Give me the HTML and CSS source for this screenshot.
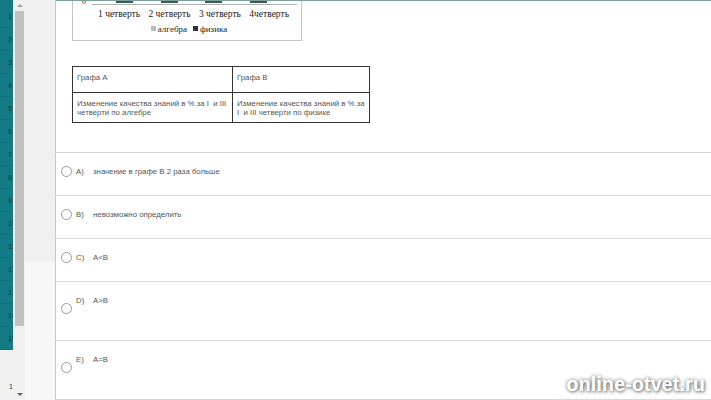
FILE: index.html
```html
<!DOCTYPE html>
<html lang="ru">

<head>
    <meta charset="UTF-8">
    <meta name="viewport" content="width=device-width, initial-scale=1.0">
    <title>Тест</title>
    <link rel="stylesheet" href="styles.css">
</head>

<body>
    <div class="screen">
        <ul class="rows">
            <li>1</li>
            <li>2</li>
            <li>3</li>
            <li>4</li>
            <li>5</li>
            <li>6</li>
            <li>7</li>
            <li>8</li>
            <li>9</li>
            <li>10</li>
            <li>11</li>
            <li>12</li>
            <li>13</li>
            <li>14</li>
            <li>15</li>
            <li class="tail">1`</li>
        </ul>
        <div class="scrollbar">
            <span class="arrow up"></span>
            <div class="thumb"></div>
            <span class="arrow down"></span>
        </div>
        <div class="side"></div>

        <div class="page">
            <div class="chart">
                <div class="plot">
                    <span class="zero">0</span>
                    <div class="axis">
                        <i></i><i></i><i></i><i></i>
                    </div>
                </div>
                <div class="quarters">
                    <span>1 четверть</span>
                    <span>2 четверть</span>
                    <span>3 четверть</span>
                    <span>4четверть</span>
                </div>
                <div class="legend">
                    <span><b class="mark dots"></b>алгебра</span>
                    <span><b class="mark"></b>физика</span>
                </div>
            </div>

            <table class="grafa">
                <tr class="head">
                    <td class="col-a">Графа А</td>
                    <td>Графа В</td>
                </tr>
                <tr>
                    <td class="col-a">Изменение качества знаний в % за I &nbsp;и III четверти по алгебре</td>
                    <td>Изменение качества знаний в % за I &nbsp;и III четверти по физике</td>
                </tr>
            </table>

            <div class="options">
                <label class="option">
                    <span class="radio"></span>
                    <span class="letter">A)</span>
                    <span class="answer">значение в графе В 2 раза больше</span>
                </label>
                <label class="option">
                    <span class="radio"></span>
                    <span class="letter">B)</span>
                    <span class="answer">невозможно определить</span>
                </label>
                <label class="option">
                    <span class="radio"></span>
                    <span class="letter">C)</span>
                    <span class="answer">A&lt;B</span>
                </label>
                <label class="option low">
                    <span class="radio"></span>
                    <span class="letter">D)</span>
                    <span class="answer">A&gt;B</span>
                </label>
                <label class="option low last">
                    <span class="radio"></span>
                    <span class="letter">E)</span>
                    <span class="answer">A=B</span>
                </label>
            </div>
        </div>

        <div class="watermark">online-otvet.ru</div>
    </div>
</body>

</html>
```

FILE: styles.css
```css
* {
    margin: 0;
    padding: 0;
    box-sizing: border-box;
}

ul {
    list-style: none;
}

body {
    font-family: "Liberation Sans", Arial, sans-serif;
    background: #fff;
    overflow: hidden;
}

.screen {
    width: 711px;
    height: 400px;
    display: flex;
    position: relative;
    overflow: hidden;
}

/* row numbers on the left */
.rows {
    width: 14px;
    flex-shrink: 0;
    background: #f0f0f0;
    border-right: 1px solid #e9f3f4;
    overflow: hidden;
    padding-top: 5px;
}

.rows li {
    height: 23px;
    line-height: 23px;
    font-size: 7px;
    color: #0c3a3f;
    padding-left: 8px;
    white-space: nowrap;
    background: #137b86;
    border-bottom: 1px solid #10727c;
}

.rows li:first-child {
    margin-top: -5px;
    height: 28px;
    line-height: 33px;
}

.rows li.tail {
    background: transparent;
    border: none;
    margin-top: 25px;
    color: #333;
    padding-left: 9px;
}

/* scrollbar */
.scrollbar {
    width: 11px;
    flex-shrink: 0;
    background: #f0f0f0;
    display: flex;
    flex-direction: column;
    align-items: center;
}

.arrow {
    width: 0;
    height: 0;
    border-left: 3px solid transparent;
    border-right: 3px solid transparent;
    margin: 4px 0;
}

.arrow.up {
    border-bottom: 3px solid #a0a0a0;
}

.arrow.down {
    border-top: 3px solid #606060;
    margin-top: auto;
}

.thumb {
    width: 9px;
    height: 315px;
    background: #c1c1c1;
}

.side {
    width: 31px;
    flex-shrink: 0;
    background: linear-gradient(#efefef 262px, #f7f7f7 262px);
    border-right: 1px solid #c8c8c8;
}

/* main column */
.page {
    flex: 1;
    border-top: 1px solid #7c9fa2;
}

.chart {
    width: 230px;
    height: 40px;
    margin-left: 16px;
    border: 1px solid #c4c4c4;
    border-top: none;
    overflow: hidden;
    font-family: "Liberation Serif", "Times New Roman", serif;
    color: #222;
}

.plot {
    display: flex;
    height: 5px;
    margin-top: -3px;
}

.zero {
    font-size: 8px;
    line-height: 8px;
    margin-left: 9px;
    width: 10px;
}

.axis {
    width: 205px;
    height: 7px;
    border-bottom: 1px solid #b0b0b0;
    display: flex;
    justify-content: space-around;
    align-items: flex-end;
    padding: 0 16px 0 10px;
}

.axis i {
    width: 17px;
    height: 3px;
    background: #3e5a58;
    margin-bottom: 1px;
}

.quarters {
    display: flex;
    justify-content: space-between;
    padding: 0 12px 0 25px;
    font-size: 9.5px;
    line-height: 14px;
    margin-top: 4px;
}

.legend {
    display: flex;
    justify-content: center;
    gap: 6px;
    font-size: 9px;
    line-height: 15px;
    padding-left: 4px;
    margin-top: 1px;
}

.mark {
    display: inline-block;
    width: 5px;
    height: 5px;
    background: #333;
    margin-right: 2px;
    vertical-align: 1px;
}

.mark.dots {
    background: radial-gradient(#222 35%, #bbb 36%);
    background-size: 2px 2px;
}

/* the two columns of the task */
.grafa {
    margin: 25px 0 0 16px;
    width: 298px;
    border-collapse: collapse;
    font-size: 7.8px;
    color: #555;
}

.grafa td {
    border: 1px solid #333;
    vertical-align: top;
    padding: 6px 4px 0 4px;
    line-height: 9px;
    height: 30px;
}

.grafa td.col-a {
    width: 160px;
}

.grafa tr.head td {
    height: 26px;
}

/* answer options */
.options {
    margin-top: 29px;
    border-top: 1px solid #d8d8d8;
    margin-left: -1px;
}

.option {
    display: flex;
    align-items: flex-start;
    height: 43px;
    padding: 13px 0 0 6px;
    border-bottom: 1px solid #d8d8d8;
    font-size: 7.8px;
    color: #555;
    line-height: 11px;
}

.option.low {
    height: 59px;
}

.radio {
    width: 11px;
    height: 11px;
    border: 1px solid #9a9a9a;
    border-radius: 50%;
    background: #fff;
    flex-shrink: 0;
}

.option.low .radio {
    margin-top: 8px;
}

.letter {
    width: 17px;
    margin-left: 4px;
}

.watermark {
    position: absolute;
    right: 6px;
    bottom: 4px;
    font-size: 19.5px;
    font-weight: bold;
    letter-spacing: 0.2px;
    color: #fff;
    text-shadow: 0 0 4px #777, 1px 1px 3px #888;
}
```
